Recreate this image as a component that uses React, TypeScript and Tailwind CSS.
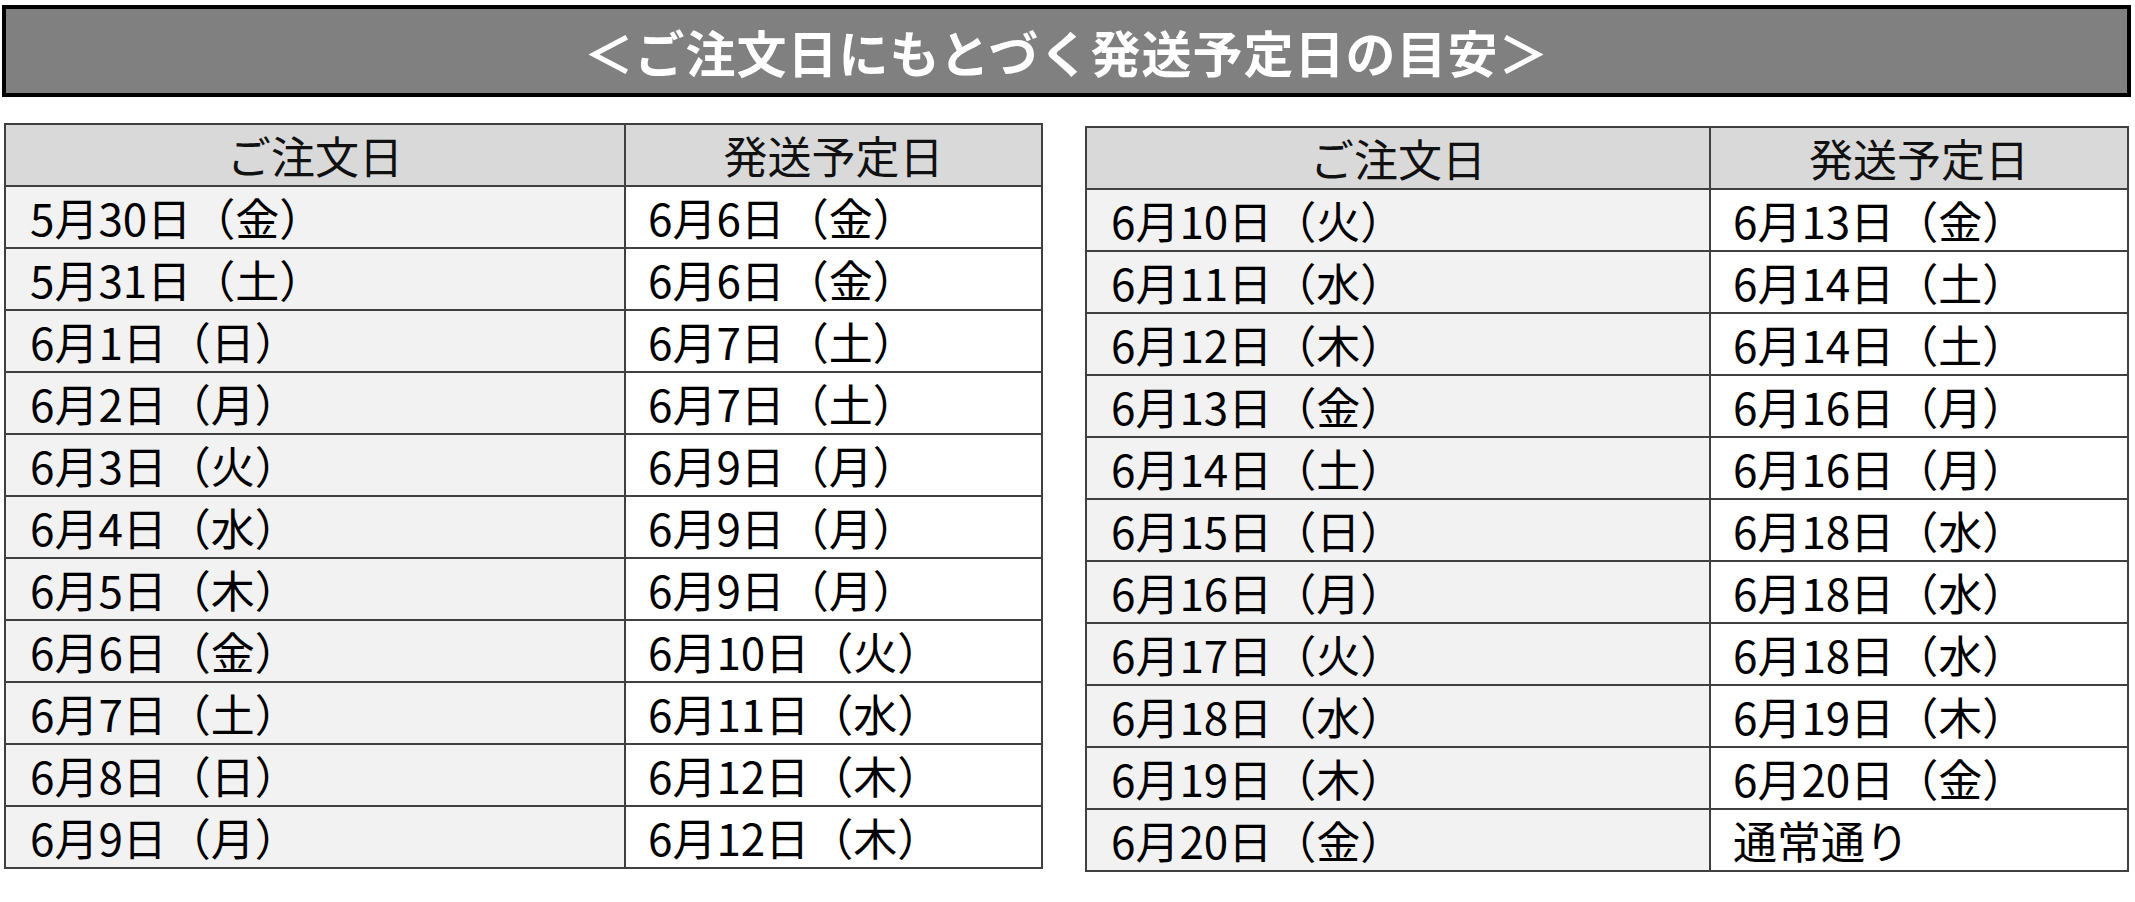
const leftRows = [
  ['5月30日（金）', '6月6日（金）'],
  ['5月31日（土）', '6月6日（金）'],
  ['6月1日（日）', '6月7日（土）'],
  ['6月2日（月）', '6月7日（土）'],
  ['6月3日（火）', '6月9日（月）'],
  ['6月4日（水）', '6月9日（月）'],
  ['6月5日（木）', '6月9日（月）'],
  ['6月6日（金）', '6月10日（火）'],
  ['6月7日（土）', '6月11日（水）'],
  ['6月8日（日）', '6月12日（木）'],
  ['6月9日（月）', '6月12日（木）'],
];

const rightRows = [
  ['6月10日（火）', '6月13日（金）'],
  ['6月11日（水）', '6月14日（土）'],
  ['6月12日（木）', '6月14日（土）'],
  ['6月13日（金）', '6月16日（月）'],
  ['6月14日（土）', '6月16日（月）'],
  ['6月15日（日）', '6月18日（水）'],
  ['6月16日（月）', '6月18日（水）'],
  ['6月17日（火）', '6月18日（水）'],
  ['6月18日（水）', '6月19日（木）'],
  ['6月19日（木）', '6月20日（金）'],
  ['6月20日（金）', '通常通り'],
];

function ScheduleTable({ rows, width, cols, className }: { rows: string[][]; width: string; cols: string; className?: string }) {
  return (
    <div className={`border-2 border-[#404040] ${width} ${className ?? ''}`}>
      <div className={`grid ${cols} h-[60px] bg-[#d9d9d9] text-[#111]`}>
        <div className="flex items-center justify-center border-r-2 border-[#404040]">ご注文日</div>
        <div className="flex items-center justify-center">発送予定日</div>
      </div>
      {rows.map((row, i) => (
        <div key={i} className={`grid ${cols} h-[62px] border-t-2 border-[#404040] text-black`}>
          <div className="flex items-center pl-[24px] bg-[#f2f2f2] border-r-2 border-[#404040]">{row[0]}</div>
          <div className="flex items-center pl-[22px] bg-white">{row[1]}</div>
        </div>
      ))}
    </div>
  );
}

export default function App() {
  return (
    <div
      className="w-[2135px] h-[902px] bg-white pt-[5px] px-[2px] text-[44px] leading-none"
      style={{ fontFamily: '"Noto Sans CJK JP", "Noto Sans", sans-serif' }}
    >
      <div className="h-[92px] w-[2129px] border-4 border-black bg-[#808080] flex items-center justify-center">
        <span className="text-white text-[50px] font-bold tracking-[1px]">＜ご注文日にもとづく発送予定日の目安＞</span>
      </div>
      <div className="flex items-start gap-[42px] mt-[26px] pl-[2px]">
        <ScheduleTable rows={leftRows} width="w-[1039px]" cols="grid-cols-[620px_1fr]" />
        <ScheduleTable rows={rightRows} width="w-[1044px]" cols="grid-cols-[624px_1fr]" className="mt-[3px]" />
      </div>
    </div>
  );
}
